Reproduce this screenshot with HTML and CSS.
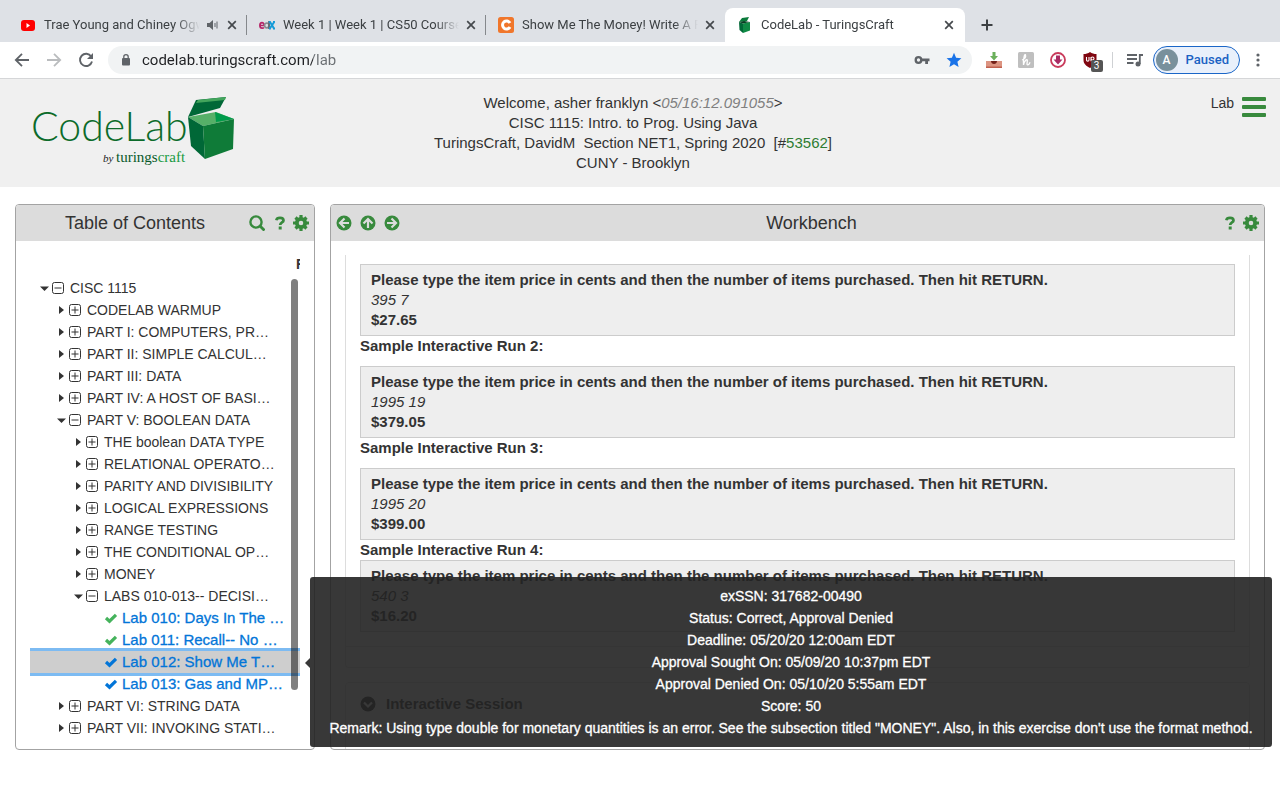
FILE: index.html
```html
<!DOCTYPE html>
<html lang="en">
<head>
    <meta charset="UTF-8">
    <meta name="viewport" content="width=device-width, initial-scale=1.0">
    <title>CodeLab - TuringsCraft</title>
    <link rel="stylesheet" href="styles.css">
</head>
<body>
    <!-- Shared icons -->
    <svg class="sprite" aria-hidden="true">
        <symbol id="i-close" viewBox="0 0 16 16"><path d="M4.2 4.2l7.6 7.6M11.8 4.2l-7.6 7.6" stroke="#45494d" stroke-width="1.7" fill="none"/></symbol>
        <symbol id="i-right" viewBox="0 0 10 12"><path d="M3 2l5 4-5 4z" fill="#333"/></symbol>
        <symbol id="i-down" viewBox="0 0 10 12"><path d="M1 4.500h9L5.500 9z" fill="#333"/></symbol>
        <symbol id="i-plus" viewBox="0 0 12 12"><rect x=".5" y=".5" width="11" height="11" rx="2" fill="none" stroke="#333"/><path d="M2.500 6h7M6 2.500v7" stroke="#333"/></symbol>
        <symbol id="i-minus" viewBox="0 0 12 12"><rect x=".5" y=".5" width="11" height="11" rx="2" fill="none" stroke="#333"/><path d="M2.500 6h7" stroke="#333"/></symbol>
        <symbol id="i-check" viewBox="0 0 14 12"><path d="M2 6l3.500 3.200L12 2.800" fill="none" stroke="currentColor" stroke-width="3.200"/></symbol>
        <symbol id="i-help" viewBox="0 0 10 14"><path d="M1.300 4.300C1.600 2.500 3 1.800 5 1.800c2.200 0 3.500 1 3.500 2.600C8.500 6.500 5.200 6.300 5.200 9" fill="none" stroke="currentColor" stroke-width="2.700"/><path d="M3.700 10.500h3V13.500h-3z" fill="currentColor"/></symbol>
        <symbol id="i-gear" viewBox="0 0 16 16"><circle cx="8" cy="8" r="4.200" fill="none" stroke="currentColor" stroke-width="3.800"/><path d="M8 0v3M8 13v3M0 8h3M13 8h3M2.500 2.500l2 2M11.500 11.500l2 2M2.500 13.500l2-2M11.500 4.500l2-2" stroke="currentColor" stroke-width="3.200"/></symbol>
        <symbol id="i-arrow" viewBox="0 0 16 16"><circle cx="8" cy="8" r="7.500" fill="currentColor"/><path d="M8.500 3.500L4 8l4.500 4.500M4.500 8H13" fill="none" stroke="#dcdcdc" stroke-width="2.200"/></symbol>
    </svg>

    <!-- Browser tabs -->
    <div class="tabs">
        <div class="tab">
            <svg class="favicon" viewBox="0 0 16 16"><rect x="1" y="3" width="14" height="11" rx="3" fill="#f00"/><path d="M6.500 6v5L10 8.500z" fill="#fff"/></svg>
            <span class="tab-title">Trae Young and Chiney Ogwumike</span>
            <svg class="audio" viewBox="0 0 16 16"><path d="M3 6h2.500L9 3v10L5.500 10H3z" fill="#5f6368"/><path d="M11 6v4M13 4.500v7" stroke="#5f6368"/></svg>
            <button class="tab-close" aria-label="Close tab"><svg><use href="#i-close"/></svg></button>
        </div>
        <div class="tab">
            <svg class="favicon" viewBox="0 0 16 16"><g fill="none" stroke-width="1.700"><path d="M1 8.500h4.200C5.200 6.500 4 5.700 3 5.700S.9 6.600.9 8.500 2 11.200 3.200 11.200 5 10.500 5 10.500" stroke="#b62568"/><circle cx="7.800" cy="8.500" r="2.300" stroke="#888b91"/><path d="M10 4v8" stroke="#5d6873"/><path d="M9.800 4.800h2M14 4.800h2M10 11.700h1.800M14 11.700h2" stroke="#159bd8"/><path d="M11 5l4 6.500M15.200 5l-4.400 6.500" stroke="#159bd8" stroke-width="2"/></g></svg>
            <span class="tab-title">Week 1 | Week 1 | CS50 Courseware</span>
            <button class="tab-close" aria-label="Close tab"><svg><use href="#i-close"/></svg></button>
        </div>
        <div class="tab tab-last">
            <svg class="favicon" viewBox="0 0 16 16"><rect width="16" height="16" rx="2.500" fill="#f0762b"/><path d="M12 6A4 4 0 1 0 12 10" fill="none" stroke="#fff" stroke-width="3"/></svg>
            <span class="tab-title">Show Me The Money! Write A Program</span>
            <button class="tab-close" aria-label="Close tab"><svg><use href="#i-close"/></svg></button>
        </div>
        <div class="tab active">
            <svg class="favicon" viewBox="0 0 16 16"><path d="M2 5l3-4 7-1-2 4z" fill="#0b7a3b"/><path d="M2 5l4 1.500V16l-3.500-3z" fill="#006837"/><path d="M6 6.500L13 5v8.500L6 16z" fill="#0f8a45"/><path d="M2 5l5-1 6 1-7 1.500z" fill="#063f22"/></svg>
            <span class="tab-title">CodeLab - TuringsCraft</span>
            <button class="tab-close" aria-label="Close tab"><svg><use href="#i-close"/></svg></button>
        </div>
        <button class="new-tab" aria-label="New tab"><svg viewBox="0 0 16 16"><path d="M8 2.500v11M2.500 8h11" stroke="#3c4043" stroke-width="2"/></svg></button>
    </div>

    <!-- Browser toolbar -->
    <div class="toolbar">
        <button class="tool" aria-label="Back"><svg viewBox="0 0 16 16"><path d="M15 8H2M8 1.800L1.800 8 8 14.200" fill="none" stroke="#5f6368" stroke-width="1.800"/></svg></button>
        <button class="tool" aria-label="Forward"><svg viewBox="0 0 16 16"><path d="M1 8h13M8 1.800L14.200 8 8 14.200" fill="none" stroke="#babcbe" stroke-width="1.800"/></svg></button>
        <button class="tool" aria-label="Reload"><svg viewBox="0 0 16 16"><path d="M13.200 4.500A6.100 6.100 0 1 0 14 9.500" fill="none" stroke="#5f6368" stroke-width="1.900"/><path d="M15 1v6H9z" fill="#5f6368"/></svg></button>
        <div class="address">
            <svg class="lock" viewBox="0 0 10 14"><rect x="1" y="5" width="8" height="7.500" rx="1" fill="#5f6368"/><path d="M2.800 6V3.800a2.200 2.200 0 0 1 4.400 0V6" fill="none" stroke="#5f6368" stroke-width="1.300"/></svg>
            <input class="url" type="text" value="codelab.turingscraft.com/lab" aria-label="Address">
            <svg class="key" viewBox="0 0 16 10"><circle cx="4.500" cy="5" r="2.800" fill="none" stroke="#5f6368" stroke-width="2.300"/><path d="M8 3.500h7.500v2.800H14V9h-2.800V6.300H8z" fill="#5f6368"/></svg>
            <svg class="star" viewBox="0 0 16 16"><path d="M8 .8l2.100 4.900 5.300.5-4 3.500 1.200 5.200L8 12.200l-4.600 2.700 1.200-5.200-4-3.500 5.300-.5z" fill="#1a73e8"/></svg>
        </div>
        <div class="extensions">
            <svg viewBox="0 0 16 16"><path d="M0 9h16v7H0z" fill="#dc9481"/><path d="M0 14.500h16V16H0z" fill="#c0604e"/><path d="M5 9h6c0 4-6 4-6 0z" fill="#741f18"/><path d="M6.500 0h3v4H12L8 8.500 4 4h2.500z" fill="#6bb05b"/></svg>
            <svg viewBox="0 0 16 16"><rect width="16" height="16" rx="1.500" fill="#bfbfbf"/><path d="M4 8c3-1 4-3 3.500-5S5 6 5.500 13C6 9 9.500 6 9.300 8.500c0 2.500-1 4.500.7 4.300 1.200-.2 1.500-1.300 2-2.500" fill="none" stroke="#fff" stroke-width="1.300"/></svg>
            <svg viewBox="0 0 16 16"><circle cx="8" cy="8" r="7" fill="#fff" stroke="#c93b5b" stroke-width="1.800"/><path d="M6 3.500h4v4h2.500L8 12.500 3.500 7.500H6z" fill="#a92b62"/></svg>
            <span class="shield">
                <svg viewBox="0 0 16 16"><path d="M8 0c2 1.500 4 2 6.500 2v6c0 4-3 6-6.500 8C4.500 14 1.500 12 1.500 8V2C4 2 6 1.500 8 0z" fill="#800610"/><path d="M4.500 5v3c0 1.500 2.500 1.500 2.500 0V5M9 5v4.200M9 6.500c0-2 3-2 3 0s-3 2-3 0" fill="none" stroke="#fff" stroke-width="1.100"/></svg>
                <span class="badge">3</span>
            </span>
        </div>
        <svg class="queue" viewBox="0 0 18 16"><path d="M1 3h10M1 7h10M1 11h6.500" stroke="#5f6368" stroke-width="1.800"/><path d="M13.800 12V3H17" fill="none" stroke="#5f6368" stroke-width="1.800"/><circle cx="12" cy="12" r="2.500" fill="#5f6368"/></svg>
        <button class="profile"><span class="avatar">A</span>Paused</button>
        <button class="more" aria-label="Menu"><svg viewBox="0 0 4 16"><g fill="#5f6368"><circle cx="2" cy="3" r="1.600"/><circle cx="2" cy="8" r="1.600"/><circle cx="2" cy="13" r="1.600"/></g></svg></button>
    </div>

    <!-- Site header -->
    <header class="site-header">
        <svg class="logo" viewBox="0 0 204 72">
            <text class="logo-name" x="-2" y="44">CodeLab</text>
            <text class="logo-by" x="70" y="65">by</text>
            <text class="logo-brand" x="83" y="65">turings<tspan class="logo-craft">craft</tspan></text>
            <path d="M163 3L193 0 187 11 155 20z" fill="#006837"/>
            <path d="M165 3L193 0 192 3 163 6z" fill="#43a55c"/>
            <path d="M155 20L183 15 201 22 170 29z" fill="#56b068"/>
            <path d="M182 15L201 22 183 25z" fill="#009b4b"/>
            <path d="M155 20L170 29 172 62 158 49z" fill="#006837"/>
            <path d="M170 29L201 22 200 52 172 62z" fill="#0f7b38"/>
        </svg>
        <div class="welcome">
            Welcome, asher franklyn &lt;<em>05/16:12.091055</em>&gt;<br>
            CISC 1115: Intro. to Prog. Using Java<br>
            TuringsCraft, DavidM&nbsp; Section NET1, Spring 2020&nbsp; [#<a href="#">53562</a>]<br>
            CUNY - Brooklyn
        </div>
        <div class="site-nav">
            <span>Lab</span>
            <button class="burger" aria-label="Menu"><span></span><span></span><span></span></button>
        </div>
    </header>

    <main class="page">
        <!-- Table of contents -->
        <section class="panel toc">
            <div class="panel-head">
                <h2>Table of Contents</h2>
                <button class="icon-btn" aria-label="Search"><svg viewBox="0 0 16 16"><circle cx="7" cy="7" r="5.600" fill="none" stroke="currentColor" stroke-width="2.400"/><path d="M11 11l4.500 4.500" stroke="currentColor" stroke-width="2.800"/></svg></button>
                <button class="icon-btn help" aria-label="Help"><svg><use href="#i-help"/></svg></button>
                <button class="icon-btn" aria-label="Settings"><svg><use href="#i-gear"/></svg></button>
            </div>
            <div class="tree">
                <div class="tree-head">Results</div>
                <ul>
                    <li><button class="row"><svg class="caret"><use href="#i-down"/></svg><svg class="box"><use href="#i-minus"/></svg>CISC 1115</button>
                        <ul>
                            <li><button class="row"><svg class="caret"><use href="#i-right"/></svg><svg class="box"><use href="#i-plus"/></svg>CODELAB WARMUP</button></li>
                            <li><button class="row"><svg class="caret"><use href="#i-right"/></svg><svg class="box"><use href="#i-plus"/></svg>PART I: COMPUTERS, PR…</button></li>
                            <li><button class="row"><svg class="caret"><use href="#i-right"/></svg><svg class="box"><use href="#i-plus"/></svg>PART II: SIMPLE CALCUL…</button></li>
                            <li><button class="row"><svg class="caret"><use href="#i-right"/></svg><svg class="box"><use href="#i-plus"/></svg>PART III: DATA</button></li>
                            <li><button class="row"><svg class="caret"><use href="#i-right"/></svg><svg class="box"><use href="#i-plus"/></svg>PART IV: A HOST OF BASI…</button></li>
                            <li><button class="row"><svg class="caret"><use href="#i-down"/></svg><svg class="box"><use href="#i-minus"/></svg>PART V: BOOLEAN DATA</button>
                                <ul>
                                    <li><button class="row"><svg class="caret"><use href="#i-right"/></svg><svg class="box"><use href="#i-plus"/></svg>THE boolean DATA TYPE</button></li>
                                    <li><button class="row"><svg class="caret"><use href="#i-right"/></svg><svg class="box"><use href="#i-plus"/></svg>RELATIONAL OPERATO…</button></li>
                                    <li><button class="row"><svg class="caret"><use href="#i-right"/></svg><svg class="box"><use href="#i-plus"/></svg>PARITY AND DIVISIBILITY</button></li>
                                    <li><button class="row"><svg class="caret"><use href="#i-right"/></svg><svg class="box"><use href="#i-plus"/></svg>LOGICAL EXPRESSIONS</button></li>
                                    <li><button class="row"><svg class="caret"><use href="#i-right"/></svg><svg class="box"><use href="#i-plus"/></svg>RANGE TESTING</button></li>
                                    <li><button class="row"><svg class="caret"><use href="#i-right"/></svg><svg class="box"><use href="#i-plus"/></svg>THE CONDITIONAL OP…</button></li>
                                    <li><button class="row"><svg class="caret"><use href="#i-right"/></svg><svg class="box"><use href="#i-plus"/></svg>MONEY</button></li>
                                    <li><button class="row"><svg class="caret"><use href="#i-down"/></svg><svg class="box"><use href="#i-minus"/></svg>LABS 010-013-- DECISI…</button></li>
                                </ul>
                            </li>
                        </ul>
                    </li>
                </ul>
                <ul class="labs">
                    <li><a class="lab" href="#"><svg class="check passed"><use href="#i-check"/></svg>Lab 010: Days In The …</a></li>
                    <li><a class="lab" href="#"><svg class="check passed"><use href="#i-check"/></svg>Lab 011: Recall-- No …</a></li>
                    <li><a class="lab selected" href="#"><svg class="check"><use href="#i-check"/></svg>Lab 012: Show Me T…</a></li>
                    <li><a class="lab" href="#"><svg class="check"><use href="#i-check"/></svg>Lab 013: Gas and MP…</a></li>
                </ul>
                <ul class="parts">
                    <li><button class="row"><svg class="caret"><use href="#i-right"/></svg><svg class="box"><use href="#i-plus"/></svg>PART VI: STRING DATA</button></li>
                    <li><button class="row"><svg class="caret"><use href="#i-right"/></svg><svg class="box"><use href="#i-plus"/></svg>PART VII: INVOKING STATI…</button></li>
                </ul>
                <div class="scroll-thumb"></div>
            </div>
        </section>

        <!-- Workbench -->
        <section class="panel workbench">
            <div class="panel-head">
                <div class="arrows">
                    <button class="icon-btn" aria-label="Previous"><svg><use href="#i-arrow"/></svg></button>
                    <button class="icon-btn up" aria-label="Up"><svg><use href="#i-arrow"/></svg></button>
                    <button class="icon-btn next" aria-label="Next"><svg><use href="#i-arrow"/></svg></button>
                </div>
                <h2>Workbench</h2>
                <button class="icon-btn help" aria-label="Help"><svg><use href="#i-help"/></svg></button>
                <button class="icon-btn" aria-label="Settings"><svg><use href="#i-gear"/></svg></button>
            </div>
            <div class="work-scroll">
                <div class="card">
                    <div class="card-body">
                        <div class="run"><b>Please type the item price in cents and then the number of items purchased. Then hit RETURN.</b><i>395 7</i><b>$27.65</b></div>
                        <h3>Sample Interactive Run 2:</h3>
                        <div class="run"><b>Please type the item price in cents and then the number of items purchased. Then hit RETURN.</b><i>1995 19</i><b>$379.05</b></div>
                        <h3>Sample Interactive Run 3:</h3>
                        <div class="run"><b>Please type the item price in cents and then the number of items purchased. Then hit RETURN.</b><i>1995 20</i><b>$399.00</b></div>
                        <h3 class="tight">Sample Interactive Run 4:</h3>
                        <div class="run"><b>Please type the item price in cents and then the number of items purchased. Then hit RETURN.</b><i>540 3</i><b>$16.20</b></div>
                    </div>
                    <div class="card-foot"></div>
                </div>
                <div class="card session">
                    <div class="session-head">
                        <svg viewBox="0 0 16 16"><circle cx="8" cy="8" r="7.500" fill="#333"/><path d="M4 6.500l4 4 4-4" fill="none" stroke="#fff" stroke-width="2.200"/></svg>
                        Interactive Session
                    </div>
                </div>
            </div>
        </section>

        <div class="tooltip" role="tooltip">
            exSSN: 317682-00490<br>
            Status: Correct, Approval Denied<br>
            Deadline: 05/20/20 12:00am EDT<br>
            Approval Sought On: 05/09/20 10:37pm EDT<br>
            Approval Denied On: 05/10/20 5:55am EDT<br>
            Score: 50<br>
            Remark: Using type double for monetary quantities is an error. See the subsection titled "MONEY". Also, in this exercise don't use the format method.
        </div>
    </main>
</body>
</html>
```
FILE: styles.css
```css
* {
    box-sizing: border-box;
}

body {
    display: flex;
    flex-direction: column;
    height: 100vh;
    margin: 0;
    overflow: hidden;
    background: #fff;
    color: #333;
    font: 14px/20px "Liberation Sans", Arial, sans-serif;
}

button {
    display: flex;
    align-items: center;
    justify-content: center;
    padding: 0;
    border: 0;
    background: none;
    color: inherit;
    font: inherit;
}

a {
    color: #2e7d32;
    text-decoration: none;
}

svg {
    flex: none;
    display: block;
    width: 16px;
    height: 16px;
}

ul {
    margin: 0;
    padding: 0;
    list-style: none;
}

.sprite {
    position: absolute;
    width: 0;
    height: 0;
}

/* Tabs */
.tabs {
    flex: none;
    display: flex;
    align-items: flex-end;
    height: 42px;
    padding-left: 8px;
    background: #dee1e6;
    font: 13px/16px Roboto, sans-serif;
    color: #3c4043;
}

.tab {
    display: flex;
    flex: 0 1 239px;
    align-items: center;
    gap: 8px;
    min-width: 0;
    height: 34px;
    padding: 0 7px 0 12px;
    background: linear-gradient(#85888c, #85888c) right center / 1px 20px no-repeat;
}

.tab-last {
    background: none;
}

.tab.active {
    flex-basis: 240px;
    padding-right: 8px;
    border-radius: 8px 8px 0 0;
    background: #fff;
}

.tab-title {
    flex: 1;
    min-width: 0;
    margin-right: -4px;
    overflow: hidden;
    white-space: nowrap;
    -webkit-mask-image: linear-gradient(to left, transparent, #000 24px);
    mask-image: linear-gradient(to left, transparent, #000 24px);
}

.tab-close {
    flex: none;
    width: 16px;
}

.audio {
    margin-right: -4px;
}

.new-tab {
    width: 16px;
    height: 34px;
    margin-left: 14px;
}

/* Toolbar */
.toolbar {
    flex: none;
    display: flex;
    align-items: center;
    height: 37px;
    padding: 0 8px 0 14px;
    border-bottom: 1px solid #d5d6d8;
    font: 15px/20px Roboto, sans-serif;
}

.tool {
    width: 16px;
    margin-right: 16px;
}

.address {
    display: flex;
    flex: 1;
    align-items: center;
    gap: 16px;
    min-width: 0;
    height: 28px;
    margin-left: -2px;
    padding: 0 10px 0 13px;
    border-radius: 14px;
    background: #f1f3f4;
}

.lock {
    width: 10px;
    height: 14px;
}

.url {
    flex: 1;
    min-width: 0;
    margin-left: -5px;
    padding: 0;
    border: 0;
    outline: 0;
    /* host in black, path in grey */
    background: linear-gradient(to right, #202124 171px, #6b6f73 171px);
    -webkit-background-clip: text;
    background-clip: text;
    color: transparent;
    font: inherit;
}

.key {
    height: 10px;
}

.extensions {
    display: flex;
    gap: 16px;
    margin-left: 14px;
    padding-right: 14px;
    border-right: 1px solid #cfd1d4;
}

.shield {
    position: relative;
}

.badge {
    position: absolute;
    top: 8px;
    left: 9px;
    width: 12px;
    height: 12px;
    border-radius: 2px;
    background: #555;
    color: #fff;
    font-size: 10px;
    line-height: 12px;
    text-align: center;
}

.queue {
    width: 18px;
    margin: 0 9px 0 13px;
}

.profile {
    gap: 8px;
    height: 28px;
    padding: 0 10px 0 2px;
    border: 1px solid #1a66c8;
    border-radius: 14px;
    background: #e9f0fb;
    color: #1a62c4;
    font-size: 13px;
    font-weight: 500;
}

.avatar {
    width: 22px;
    height: 22px;
    border-radius: 50%;
    background: #78909c;
    color: #fff;
    font-size: 12px;
    line-height: 22px;
    text-align: center;
}

.more {
    width: 4px;
    margin: 0 12px 0 16px;
}

.more svg {
    width: 4px;
}

/* Site header */
.site-header {
    flex: none;
    display: grid;
    grid-template-columns: 1fr auto 1fr;
    align-items: start;
    padding: 14px 14px 14px 0;
    background: #f0f0f0;
}

.logo {
    width: 204px;
    height: 72px;
    margin: 4px 0 0 33px;
    overflow: visible;
}

.logo-name {
    fill: #0c6b2a;
    font: 300 41px Lato, sans-serif;
}

.logo-by {
    fill: #222;
    font: italic 11px "Liberation Serif", serif;
}

.logo-brand {
    fill: #07592a;
    font: 15px "Liberation Serif", serif;
}

.logo-craft {
    fill: #189a3f;
}

.welcome {
    font-size: 15px;
    text-align: center;
}

.welcome em {
    color: #808080;
}

.site-nav {
    display: flex;
    gap: 8px;
    justify-content: flex-end;
}

.burger {
    flex-direction: column;
    gap: 4px;
    width: 24px;
    height: 28px;
}

.burger span {
    width: 24px;
    height: 4px;
    border-radius: 1px;
    background: #388a3d;
}

/* Panels */
.page {
    position: relative;
    display: flex;
    flex: 1;
    gap: 15px;
    min-height: 0;
    padding: 17px 15px 50px;
}

.panel {
    display: flex;
    flex-direction: column;
    min-width: 0;
    border: 1px solid #a3a3a3;
    border-radius: 4px;
    overflow: hidden;
}

.toc {
    flex: 0 0 300px;
}

.workbench {
    flex: 1;
}

.panel-head {
    flex: none;
    display: flex;
    align-items: center;
    gap: 8px;
    height: 36px;
    padding: 0 5px;
    background: #dcdcdc;
}

.panel-head h2 {
    flex: 1;
    margin: 0;
    font-size: 18px;
    font-weight: normal;
    text-align: center;
}

.toc h2 {
    padding-left: 8px;
}

.icon-btn {
    color: #388a3d;
}

.help {
    justify-content: flex-end;
    width: 12px;
}

.help svg {
    width: 10px;
    height: 14px;
}

.arrows {
    display: flex;
    gap: 8px;
}

.up {
    transform: rotate(90deg);
}

.next {
    transform: rotate(180deg);
}

/* Tree */
.tree {
    position: relative;
    flex: 1;
    margin: 13px 14px 0;
    overflow: hidden;
}

.tree-head {
    height: 23px;
    padding-left: 266px;
    font-weight: bold;
}

.tree ul ul {
    padding-left: 17px;
}

.row,
.lab {
    display: flex;
    align-items: center;
    justify-content: flex-start;
    height: 22px;
    white-space: nowrap;
}

.row {
    padding-left: 9px;
}

.caret {
    width: 10px;
    height: 12px;
    margin-right: 3px;
}

.box {
    width: 12px;
    height: 12px;
    margin-right: 6px;
}

.lab {
    padding-left: 74px;
    color: #0275d8;
    font-size: 15px;
    -webkit-text-stroke: 0.3px #0275d8;
}

.check {
    width: 14px;
    height: 12px;
    margin-right: 4px;
}

.passed {
    color: #45b35c;
}

.selected {
    background: #cecece;
    box-shadow: 0 0 0 3px #7dbbf2;
}

.tree .parts {
    padding-left: 17px;
}

.scroll-thumb {
    position: absolute;
    top: 25px;
    right: 2px;
    bottom: 59px;
    width: 7px;
    border-radius: 4px;
    background: rgba(0, 0, 0, 0.5);
}

/* Workbench */
.work-scroll {
    flex: 1;
    margin: 14px 14px 0;
    overflow: hidden;
    font-size: 15px;
}

.card {
    border: 1px solid #ddd;
    border-top: 0;
    border-radius: 0 0 4px 4px;
}

.card-body {
    padding: 9px 14px 14px;
}

.run {
    padding: 5px 10px;
    border: 1px solid #ccc;
    background: #eee;
}

.run b,
.run i {
    display: block;
}

.card h3 {
    margin: 0 0 10px;
    font-size: 15px;
}

.card h3.tight {
    margin-bottom: 0;
}

.card-foot {
    height: 21px;
    border-top: 1px solid #ddd;
}

.session {
    margin-top: 14px;
    border-top: 1px solid #ddd;
    border-radius: 4px;
    height: 100px;
}

.session-head {
    display: flex;
    align-items: center;
    gap: 10px;
    height: 43px;
    padding-left: 14px;
    border-bottom: 1px solid #ddd;
    font-weight: bold;
}

/* Lab status tooltip */
.tooltip {
    position: absolute;
    top: 390px;
    right: 8px;
    left: 310px;
    padding: 8px;
    border-radius: 3px;
    background: rgba(34, 34, 34, 0.9);
    color: #fff;
    font-size: 14px;
    line-height: 22px;
    text-align: center;
    -webkit-text-stroke: 0.3px #fff;
}

.tooltip::before {
    content: "";
    position: absolute;
    top: 81px;
    left: -5px;
    border: 5px solid transparent;
    border-left: 0;
    border-right-color: #383838;
}
```
